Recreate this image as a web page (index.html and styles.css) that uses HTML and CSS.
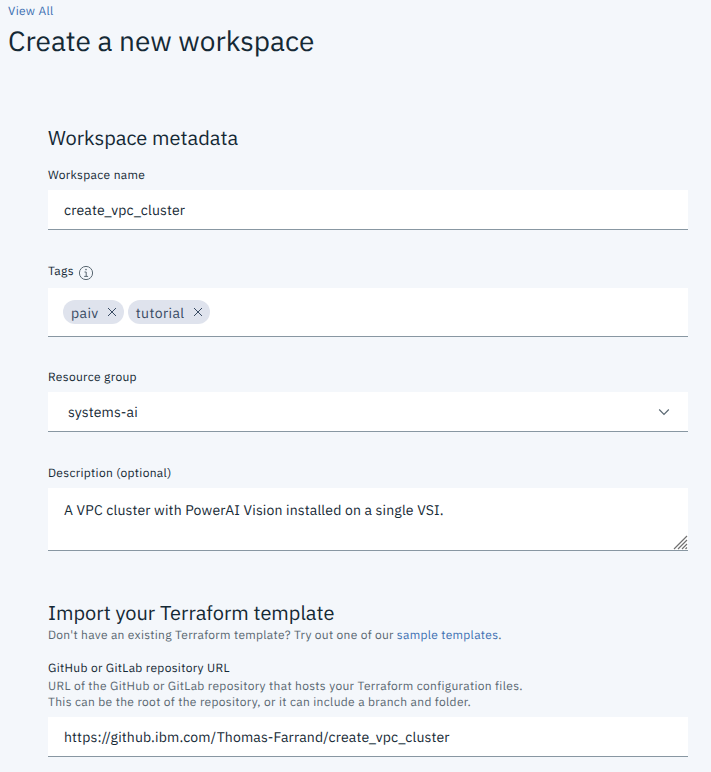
FILE: index.html
```html
<!DOCTYPE html>
<html lang="en">
<head>
<meta charset="utf-8">
<title>Create a new workspace</title>
<link rel="stylesheet" href="styles.css">
</head>
<body>
<header class="page-header">
  <a class="link back">View All</a>
  <h1 class="page-title">Create a new workspace</h1>
</header>
<main class="form">
  <section class="section">
    <h2 class="section-title">Workspace metadata</h2>
    <div class="field first">
      <div class="label">Workspace name</div>
      <div class="control">create_vpc_cluster</div>
    </div>
    <div class="field">
      <div class="label">Tags
        <svg class="info" viewBox="0 0 16 16" width="16" height="16"><circle cx="8" cy="8" r="6.6"/><path d="M6.5 7H8.2V11.3M6.2 11.4H10.1"/><circle class="dot" cx="8" cy="4.6" r=".8"/></svg>
      </div>
      <div class="control tags">
        <span class="tag">paiv<svg viewBox="0 0 10 10" width="10" height="10"><path d="M1 1L9 9M9 1L1 9"/></svg></span>
        <span class="tag">tutorial<svg viewBox="0 0 10 10" width="10" height="10"><path d="M1 1L9 9M9 1L1 9"/></svg></span>
      </div>
    </div>
    <div class="field group">
      <div class="label">Resource group</div>
      <div class="control select">systems-ai<svg viewBox="0 0 12 8" width="12" height="8"><path d="M1.2 1.5L6 6.3L10.8 1.5"/></svg></div>
    </div>
    <div class="field">
      <div class="label">Description (optional)</div>
      <div class="control area">A VPC cluster with PowerAI Vision installed on a single VSI.
        <svg class="grip" viewBox="0 0 15 15" width="15" height="15"><path d="M1 14L14 1M5 14L14 5M9 14L14 9M12.5 14L14 12.5"/></svg>
      </div>
    </div>
  </section>
  <section class="section import">
    <h2 class="section-title">Import your Terraform template</h2>
    <p class="helper intro">Don't have an existing Terraform template? Try out one of our <a class="link">sample templates</a>.</p>
    <div class="field repo">
      <div class="label">GitHub or GitLab repository URL</div>
      <p class="helper">URL of the GitHub or GitLab repository that hosts your Terraform configuration files.<br>This can be the root of the repository, or it can include a branch and folder.</p>
      <div class="control">https://github.ibm.com/Thomas-Farrand/create_vpc_cluster</div>
    </div>
  </section>
</main>
</body>
</html>
```
FILE: styles.css
```css
* { box-sizing: border-box; }
body {
  margin: 0;
  background: #f4f7fb;
  color: #152935;
  font-family: "IBM Plex Sans", Roboto, sans-serif;
  font-size: 14px;
  text-rendering: geometricPrecision;
}
h1, h2, p { margin: 0; font-weight: 400; }
.page-header { padding: 4px 8px 0; }
.link { color: #3d70b2; }
.back { display: block; font-size: 12px; line-height: 16px; letter-spacing: .32px; }
.page-title { margin-top: 3px; font-size: 28px; line-height: 36px; }
.form { width: 640px; margin: 66px 0 0 48px; }
.section-title { font-size: 20px; line-height: 26px; }
.field { margin-top: 34px; }
.field.first { margin-top: 17px; }
.field.group { margin-top: 33px; }
.field.repo { margin-top: 17px; }
.label { display: flex; gap: 4px; height: 16px; font-size: 12px; line-height: 16px; letter-spacing: .32px; }
.helper { font-size: 12px; line-height: 16px; letter-spacing: .32px; color: #5a6872; }
.helper.intro { margin-top: 2px; letter-spacing: .29px; }
.repo > .helper { margin-top: 2px; }
.control {
  display: flex;
  align-items: center;
  height: 40px;
  margin-top: 6px;
  padding: 0 16px;
  background: #fff;
  border-bottom: 1px solid #8897a2;
  letter-spacing: .16px;
}
svg { flex: none; fill: none; stroke: #5a6872; }
.info { margin-top: 1px; }
.info .dot { fill: #5a6872; stroke: none; }
.tags { height: 49px; margin-top: 8px; padding: 0 15px; gap: 4px; }
.tag {
  display: flex;
  align-items: center;
  justify-content: space-between;
  height: 24px;
  padding: 1px 7px 0 8px;
  gap: 8px;
  border-radius: 12px;
  background: #dfe3ed;
  color: #394b63;
  letter-spacing: .42px;
}
.tag svg { margin-top: -1px; stroke: #394b63; }
.select { justify-content: space-between; padding: 0 18px 0 20px; }
.select svg { stroke-width: 1.2; }
.area { position: relative; align-items: flex-start; height: 63px; padding-top: 13px; line-height: 18px; }
.grip { position: absolute; right: 0; bottom: 0; stroke: #707070; stroke-width: 1.2; }
.import { margin-top: 49px; }
```
